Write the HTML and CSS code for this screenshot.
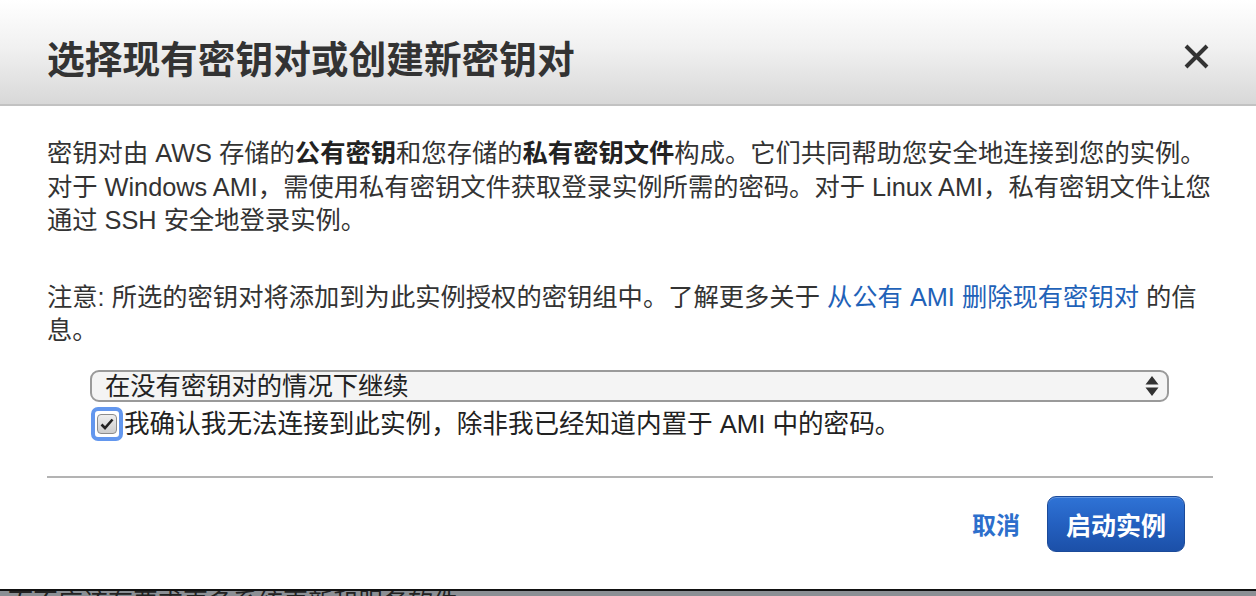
FILE: index.html
```html
<!DOCTYPE html>
<html lang="zh-CN">
<head>
<meta charset="utf-8">
<title>选择现有密钥对或创建新密钥对</title>
<link rel="stylesheet" href="styles.css">
</head>
<body>
<div class="modal">
  <div class="header">
    <h1 class="title">选择现有密钥对或创建新密钥对</h1>
    <button class="close" aria-label="关闭">
      <svg width="27" height="25" viewBox="0 0 27 25"><path d="M3 2 L24 23 M24 2 L3 23" stroke="#333" stroke-width="4" stroke-linecap="butt" fill="none"/></svg>
    </button>
  </div>
  <div class="body">
    <p class="para">密钥对由 AWS 存储的<b>公有密钥</b>和您存储的<b>私有密钥文件</b>构成。它们共同帮助您安全地连接到您的实例。<br>对于 Windows AMI，需使用私有密钥文件获取登录实例所需的密码。对于 Linux AMI，私有密钥文件让您<br>通过 SSH 安全地登录实例。</p>
    <p class="para note">注意: 所选的密钥对将添加到为此实例授权的密钥组中。了解更多关于 <a class="link" href="#">从公有 AMI 删除现有密钥对</a> 的信<br>息。</p>
    <div class="select">
      <span class="select-text">在没有密钥对的情况下继续</span>
      <svg class="arrows" width="14" height="22" viewBox="0 0 14 22"><path d="M7 1 L13.5 9.5 L0.5 9.5 Z M7 21 L13.5 12.5 L0.5 12.5 Z" fill="#333"/></svg>
    </div>
    <label class="check-row">
      <span class="ring"><span class="box"><svg width="14" height="12" viewBox="0 0 14 12"><path d="M1.5 6.5 L5 10 L12.5 1.5" stroke="#222" stroke-width="2.6" fill="none"/></svg></span></span>
      <span class="check-label">我确认我无法连接到此实例，除非我已经知道内置于 AMI 中的密码。</span>
    </label>
    <div class="divider"></div>
    <div class="footer">
      <a class="cancel" href="#">取消</a>
      <button class="primary">启动实例</button>
    </div>
  </div>
</div>
<div class="edge"></div>
<div class="behind"><span class="behind-text">而不应该有要求更多系统更新和服务软件</span></div>
</body>
</html>
```
FILE: styles.css
```css
html, body {
  margin: 0;
  padding: 0;
}
body {
  width: 1256px;
  height: 596px;
  overflow: hidden;
  background: #fff;
  font-family: "Liberation Sans", "Noto Sans CJK SC", sans-serif;
  color: #333;
}
.modal {
  height: 589px;
  display: flex;
  flex-direction: column;
  background: #fff;
}
.header {
  height: 96px;
  padding: 8px 46px 0 47px;
  display: flex;
  align-items: center;
  justify-content: space-between;
  background: linear-gradient(to bottom, #ffffff 0%, #f1f1f1 45%, #d8d8d8 100%);
  border-bottom: 2px solid #c2c2c2;
}
.title {
  margin: 0;
  font-size: 37.7px;
  font-weight: 700;
  color: #333;
  white-space: nowrap;
}
.close {
  border: 0;
  background: transparent;
  padding: 0;
  width: 27px;
  height: 25px;
  display: flex;
}
.body {
  padding: 31px 43px 0 47px;
  display: flex;
  flex-direction: column;
}
.para {
  margin: 0;
  font-size: 25.3px;
  line-height: 33.5px;
  white-space: nowrap;
  color: #333;
}
.para b {
  font-weight: 700;
  color: #222;
}
.note {
  margin-top: 43px;
}
.link {
  color: #1f62b8;
  text-decoration: none;
}
.select {
  margin: 22px 44px 0 43px;
  height: 28px;
  border: 2px solid #9a9a9a;
  border-radius: 9px;
  background: #f4f4f4;
  display: flex;
  align-items: center;
  justify-content: space-between;
  padding: 0 8px 0 13px;
}
.select-text {
  font-size: 25.3px;
  line-height: 28px;
  color: #222;
}
.arrows {
  display: block;
}
.check-row {
  margin: 5px 0 0 44px;
  display: flex;
  align-items: center;
}
.ring {
  width: 24px;
  height: 26px;
  border: 4px solid #6397ee;
  border-radius: 7px;
  display: flex;
  align-items: center;
  justify-content: center;
  background: #fff;
}
.box {
  width: 18px;
  height: 18px;
  border: 1px solid #8c8c8c;
  border-radius: 4px;
  background: linear-gradient(to bottom, #eeeeee, #cdcdcd);
  display: flex;
  align-items: center;
  justify-content: center;
}
.check-label {
  font-size: 25.6px;
  line-height: 34px;
  color: #222;
  margin-left: 1px;
  white-space: nowrap;
}
.divider {
  margin-top: 35px;
  height: 2px;
  background: #b3b3b3;
}
.footer {
  margin-top: 18px;
  display: flex;
  justify-content: flex-end;
  align-items: center;
  padding-right: 28px;
  gap: 27px;
}
.cancel {
  font-size: 24px;
  font-weight: 700;
  color: #2d6fcc;
  text-decoration: none;
}
.primary {
  width: 138px;
  height: 56px;
  border: 1px solid #1b4a99;
  border-radius: 9px;
  background: linear-gradient(to bottom, #2f73d6 0%, #2460c0 50%, #1c50a8 100%);
  color: #fff;
  font-family: "Liberation Sans", "Noto Sans CJK SC", sans-serif;
  font-size: 25px;
  font-weight: 700;
  padding: 0;
  box-shadow: inset 0 1px 0 rgba(255,255,255,0.25);
}
.edge {
  height: 2px;
  background: #111;
}
.behind {
  height: 5px;
  background: #8b8f94;
  overflow: hidden;
  padding-left: 8px;
}
.behind-text {
  display: block;
  font-size: 25px;
  line-height: 25px;
  margin-top: -1px;
  color: #222;
  white-space: nowrap;
}
```
